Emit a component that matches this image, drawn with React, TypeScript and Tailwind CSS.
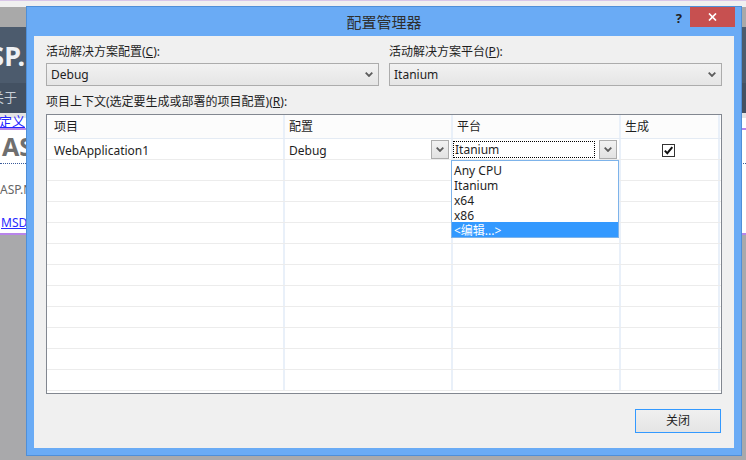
import React from "react";

const font = "font-['Noto_Sans','Noto_Sans_CJK_SC',sans-serif]";

function Chevron() {
  return (
    <svg width="8" height="5" viewBox="0 0 8 5">
      <path d="M0.7 0.7 L4 4 L7.3 0.7" fill="none" stroke="#5c5c5c" strokeWidth="1.8" />
    </svg>
  );
}

function Combo({ value }: { value: string }) {
  return (
    <div className="h-[23px] flex items-center justify-between border border-[#acacac] bg-linear-to-b from-[#f2f2f2] to-[#e5e5e5] pl-[4px] pr-[5px] text-[12px] text-[#1e1e1e]">
      <span>{value}</span>
      <Chevron />
    </div>
  );
}

function DropButton() {
  return (
    <div className="w-[18px] h-[19px] flex items-center justify-center border border-[#acacac] bg-linear-to-b from-[#f2f2f2] to-[#e2e2e2]">
      <Chevron />
    </div>
  );
}

const cols = [
  "w-[238px] pl-[7px]",
  "w-[168px] pl-[4px]",
  "w-[168px] pl-[4px]",
  "w-[99px] pl-[4px]",
];

export default function App() {
  const emptyRows = Array.from({ length: 11 });
  const platforms = ["Any CPU", "Itanium", "x64", "x86"];

  return (
    <div className={`relative w-[746px] h-[460px] overflow-hidden bg-[#a9a9ab] ${font}`}>
      {/* page behind the dialog */}
      <div className="flex flex-col">
        <div className="h-[7px] bg-[#f0f0f0] border-t border-[#d9c6e8]" />
        <div className="h-[20px] bg-[#a9a9a9]" />
        <div className="h-[56px] bg-[#4c5b6d] flex items-center">
          <div className="w-[26px] flex justify-end overflow-hidden">
            <span className="shrink-0 whitespace-nowrap text-[27px] font-bold leading-none text-[#eef1f4] pr-[1px]">
              ASP.
            </span>
          </div>
        </div>
        <div className="h-[30px] bg-[#435162] flex items-center">
          <div className="w-[17px] flex justify-end overflow-hidden">
            <span className="shrink-0 whitespace-nowrap text-[13px] text-[#c9d1d9]">关于</span>
          </div>
        </div>
        <div className="h-[5px] bg-[#e4e4e4]" />
        <div className="bg-white">
          <div className="h-[12px] flex items-end border-b-2 border-[#b884ea]">
            <div className="w-[25px] flex justify-end overflow-hidden">
              <span className="shrink-0 whitespace-nowrap text-[13px] leading-[13px] text-[#2424ff] underline">自定义</span>
            </div>
          </div>
          <div className="h-[33px] flex items-center">
            <div className="w-[26px] overflow-hidden pl-[2px] text-[25px] font-bold text-[#6f6f6f] leading-none whitespace-nowrap">
              AS
            </div>
          </div>
          <div className="h-[2px] border-t border-dotted border-[#3a5a9a]" />
          <div className="h-[34px] flex items-end">
            <div className="w-[26px] overflow-hidden text-[12px] text-[#666] whitespace-nowrap">ASP.N</div>
          </div>
          <div className="h-[34px] flex items-end pb-[1px]">
            <div className="w-[26px] overflow-hidden pl-[1px] text-[12px] text-[#2a2aff] underline whitespace-nowrap">
              MSD
            </div>
          </div>
          <div className="h-[2px] bg-[#b884ea]" />
        </div>
      </div>

      {/* dialog window */}
      <div className="absolute left-[26px] top-[6px] w-[716px] h-[450px] border border-[#4f8fd8] bg-[#6aabf5] flex flex-col">
        <div className="relative h-[29px] shrink-0 flex items-center justify-center">
          <span className="text-[15px] text-[#2e2e2e] pt-[1px]">配置管理器</span>
          <div className="absolute right-[6px] top-0 flex items-start gap-[8px]">
            <span className="text-[13px] font-bold text-[#222] leading-none pt-[5px]">?</span>
            <div className="w-[45px] h-[20px] bg-[#c75050] flex items-center justify-center">
              <svg width="9" height="8" viewBox="0 0 9 8">
                <path d="M1 0.5 L8 7.5 M8 0.5 L1 7.5" stroke="#fff" strokeWidth="1.7" />
              </svg>
            </div>
          </div>
        </div>

        <div className="flex-1 mx-[7px] mb-[7px] bg-[#f0f0f0] px-[12px] pt-[8px] flex flex-col text-[12px] text-[#1e1e1e]">
          <div className="grid grid-cols-2 gap-x-[10px]">
            <div className="flex flex-col gap-[3px]">
              <span className="leading-[16px]">
                活动解决方案配置(<span className="underline">C</span>):
              </span>
              <Combo value="Debug" />
            </div>
            <div className="flex flex-col gap-[3px]">
              <span className="leading-[16px]">
                活动解决方案平台(<span className="underline">P</span>):
              </span>
              <Combo value="Itanium" />
            </div>
          </div>

          <span className="leading-[16px] mt-[8px]">
            项目上下文(选定要生成或部署的项目配置)(<span className="underline">R</span>):
          </span>

          {/* project grid */}
          <div className="mt-[4px] h-[280px] border border-[#828790] bg-white">
            <div className="relative h-full">
              <div className="flex h-[24px] border-b border-[#e4ebf4] bg-[#fcfcfc]">
                {["项目", "配置", "平台", "生成"].map((h, i) => (
                  <div key={h} className={`${cols[i]} flex items-center pt-[1px] border-r-2 border-[#e9f0f9]`}>
                    {h}
                  </div>
                ))}
              </div>

              <div className="flex h-[21px] border-b border-[#ececec]">
                <div className={`${cols[0]} flex items-center pt-[3px] border-r-2 border-[#e9f0f9]`}>WebApplication1</div>
                <div className={`${cols[1]} flex items-center justify-between pr-[2px] pt-[1px] border-r-2 border-[#e9f0f9]`}>
                  <span className="pt-[2px]">Debug</span>
                  <DropButton />
                </div>
                <div className="w-[168px] flex items-center justify-between pr-[2px] pt-[1px] border-r-2 border-[#e9f0f9]">
                  <div className="w-[142px] h-[17px] border border-dotted border-black flex items-center pl-[1px] pt-[1px]">
                    Itanium
                  </div>
                  <DropButton />
                </div>
                <div className={`${cols[3]} flex items-center pt-[3px] border-r-2 border-[#e9f0f9]`}>
                  <div className="ml-[37px] w-[13px] h-[13px] border border-[#333] bg-white flex items-center justify-center">
                    <svg width="11" height="11" viewBox="0 0 11 11">
                      <path d="M1.8 5.6 L4.3 8.2 L9.3 2.2" fill="none" stroke="#111" strokeWidth="2" />
                    </svg>
                  </div>
                </div>
              </div>

              {emptyRows.map((_, r) => (
                <div key={r} className="flex h-[21px] border-b border-[#ececec]">
                  {cols.map((c, i) => (
                    <div key={i} className={`${c} border-r-2 border-[#e9f0f9]`} />
                  ))}
                </div>
              ))}

              {/* open platform list */}
              <div className="absolute left-[404px] top-[45px] w-[168px] h-[78px] border border-[#7db3ea] bg-white flex flex-col pt-[1px]">
                {platforms.map((p) => (
                  <div key={p} className="h-[15px] leading-[15px] pl-[2px] pt-[1px]">
                    {p}
                  </div>
                ))}
                <div className="h-[15px] leading-[15px] pl-[2px] pt-[1px] bg-[#3399ff] text-white">&lt;编辑...&gt;</div>
              </div>
            </div>
          </div>

          <div className="flex justify-end mt-[15px] pr-[1px]">
            <button className="w-[86px] h-[24px] border border-[#3399ff] bg-linear-to-b from-[#f0f0f0] to-[#e5e5e5] text-[12px] text-[#1e1e1e]">
              关闭
            </button>
          </div>
        </div>
      </div>
    </div>
  );
}
